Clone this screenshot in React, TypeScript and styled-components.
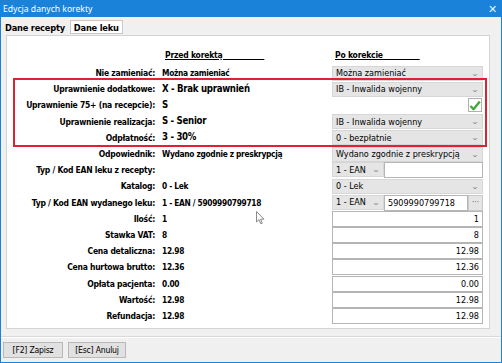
import React from "react";
import styled, { createGlobalStyle } from "styled-components";

const GlobalStyle = createGlobalStyle`
  html, body {
    margin: 0;
    padding: 0;
    background: #ffffff;
  }
  * {
    box-sizing: border-box;
  }
`;

const Window = styled.div`
  position: relative;
  width: 502px;
  height: 363px;
  display: flex;
  flex-direction: column;
  background: #f0f0f0;
  border: 1px solid #1a82d9;
  border-top: none;
  font-family: "DejaVu Sans Condensed", "DejaVu Sans", sans-serif;
  font-size: 9px;
  color: #000;
  overflow: hidden;
`;

const TitleBar = styled.div`
  height: 17px;
  margin: 0 -1px;
  padding: 0 5px 0 3px;
  display: flex;
  align-items: center;
  justify-content: space-between;
  background: #1a82d9;
  color: #fff;
  font-family: "Noto Sans", "Open Sans", sans-serif;
  font-size: 8.6px;
`;

const CloseGlyph = styled.span`
  font-size: 11px;
  line-height: 1;
  color: #e8f2fb;
`;

const TabStrip = styled.div`
  height: 18px;
  padding: 2px 0 0 0;
  display: flex;
  align-items: center;
  gap: 1px;
`;

const Tab = styled.div<{ $active?: boolean }>`
  height: 14px;
  padding: 0 3px;
  display: flex;
  align-items: center;
  font-weight: bold;
  font-size: 9.2px;
  letter-spacing: -0.2px;
  background: ${(p) => (p.$active ? "#ffffff" : "transparent")};
  border: 1px solid ${(p) => (p.$active ? "#c9c9c9" : "transparent")};
`;

const Panel = styled.div`
  margin: 0 11px 0 5px;
  height: 294px;
  background: #ffffff;
  border: 1px solid #d4d4d4;
  display: flex;
  flex-direction: column;
`;

const HeaderRow = styled.div`
  height: 29px;
  display: grid;
  grid-template-columns: 155px 170px 151px;
  align-items: center;
  padding-top: 8px;
`;

const HeaderCell = styled.span`
  grid-column: ${(p: { $col: number }) => p.$col};
  padding-left: 3px;
  font-weight: bold;
  font-size: 8.5px;
  letter-spacing: -0.2px;
  text-decoration: underline;
  white-space: pre;
`;

const Row = styled.div`
  height: 16.2px;
  display: grid;
  grid-template-columns: 155px 170px 151px;
  align-items: center;
`;

const Label = styled.span`
  padding-right: 7px;
  text-align: right;
  font-weight: bold;
  font-size: 8.5px;
  letter-spacing: -0.25px;
  white-space: nowrap;
`;

const Value = styled.span<{ $big?: boolean }>`
  font-weight: bold;
  white-space: nowrap;
  font-size: ${(p) => (p.$big ? "9.6px" : "8.3px")};
  letter-spacing: ${(p) => (p.$big ? "-0.3px" : "-0.3px")};
  margin-top: ${(p) => (p.$big ? "-2px" : "0")};
`;

const Highlight = styled.div`
  position: relative;

  &::before {
    content: "";
    position: absolute;
    left: 6px;
    right: 2px;
    top: -3px;
    bottom: -1px;
    border: 2px solid #e0222e;
    pointer-events: none;
  }
`;

const Combo = styled.div`
  height: 15px;
  padding: 0 4px 0 3px;
  display: flex;
  align-items: center;
  justify-content: space-between;
  background: #e5e5e5;
  border: 1px solid #d6d6d6;
  white-space: nowrap;
  overflow: hidden;
`;

const Chevron = styled.span`
  color: #8a8a8a;
  font-size: 8px;
  transform: scaleX(1.4);
`;

const Field = styled.div<{ $right?: boolean }>`
  height: 16px;
  padding: 0 3px;
  display: flex;
  align-items: center;
  justify-content: ${(p) => (p.$right ? "flex-end" : "flex-start")};
  background: #ffffff;
  border: 1px solid #b5b5b5;
  white-space: nowrap;
`;

const Split = styled.div<{ $cols: string }>`
  display: grid;
  grid-template-columns: ${(p) => p.$cols};
`;

const DotsButton = styled.div`
  height: 16px;
  display: flex;
  align-items: center;
  justify-content: center;
  background: #e5e5e5;
  border: 1px solid #c8c8c8;
  color: #666;
  font-size: 8px;
`;

const CheckCell = styled.div`
  display: flex;
  justify-content: flex-end;
  padding-right: 1px;
`;

const CheckBox = styled.div`
  width: 14px;
  height: 14px;
  border: 1px solid #b0b0b0;
  background: #ffffff;
  display: flex;
  align-items: center;
  justify-content: center;
`;

const Footer = styled.div`
  flex: 1;
  margin-top: 7px;
  border-top: 1px solid #dadada;
  box-shadow: inset 0 1px 0 #ffffff;
  padding: 5px 0 0 2px;
  display: flex;
  gap: 5px;
`;

const Button = styled.div`
  width: ${(p: { $w: number }) => p.$w}px;
  height: 16px;
  display: flex;
  align-items: center;
  justify-content: center;
  background: #e1e1e1;
  border: 1px solid #b9b9b9;
  font-size: 8.6px;
  letter-spacing: -0.2px;
`;

const Cursor = styled.svg`
  position: absolute;
  left: 255px;
  top: 211px;
`;

function ComboBox({ text }: { text: string }) {
  return (
    <Combo>
      <span>{text}</span>
      <Chevron>⌄</Chevron>
    </Combo>
  );
}

type Line = { label: string; value: string; control: React.ReactNode };

const highlighted: Line[] = [
  { label: "Uprawnienie dodatkowe:", value: "X - Brak uprawnień", control: <ComboBox text="IB - Inwalida wojenny" /> },
  {
    label: "Uprawnienie 75+ (na recepcie):",
    value: "S",
    control: (
      <CheckCell>
        <CheckBox>
          <svg width="12" height="11" viewBox="0 0 12 11">
            <path d="M1.5 6 L4.5 9.2 L10.8 1.5" fill="none" stroke="#3daa3a" strokeWidth="2.4" strokeLinejoin="round" />
          </svg>
        </CheckBox>
      </CheckCell>
    ),
  },
  { label: "Uprawnienie realizacja:", value: "S - Senior", control: <ComboBox text="IB - Inwalida wojenny" /> },
  { label: "Odpłatność:", value: "3 - 30%", control: <ComboBox text="0 - bezpłatnie" /> },
];

const lower: Line[] = [
  { label: "Odpowiednik:", value: "Wydano zgodnie z preskrypcją", control: <ComboBox text="Wydano zgodnie z preskrypcją" /> },
  {
    label: "Typ / Kod EAN leku z recepty:",
    value: "",
    control: (
      <Split $cols="52px 1fr">
        <ComboBox text="1 - EAN" />
        <Field />
      </Split>
    ),
  },
  { label: "Katalog:", value: "0 - Lek", control: <ComboBox text="0 - Lek" /> },
  {
    label: "Typ / Kod EAN wydanego leku:",
    value: "1 - EAN / 5909990799718",
    control: (
      <Split $cols="52px 1fr 15px">
        <ComboBox text="1 - EAN" />
        <Field>5909990799718</Field>
        <DotsButton>···</DotsButton>
      </Split>
    ),
  },
  { label: "Ilość:", value: "1", control: <Field $right>1</Field> },
  { label: "Stawka VAT:", value: "8", control: <Field $right>8</Field> },
  { label: "Cena detaliczna:", value: "12.98", control: <Field $right>12.98</Field> },
  { label: "Cena hurtowa brutto:", value: "12.36", control: <Field $right>12.36</Field> },
  { label: "Opłata pacjenta:", value: "0.00", control: <Field $right>0.00</Field> },
  { label: "Wartość:", value: "12.98", control: <Field $right>12.98</Field> },
  { label: "Refundacja:", value: "12.98", control: <Field $right>12.98</Field> },
];

export default function App() {
  return (
    <>
      <GlobalStyle />
      <Window>
        <TitleBar>
          <span>Edycja danych korekty</span>
          <CloseGlyph>✕</CloseGlyph>
        </TitleBar>
        <TabStrip>
          <Tab>Dane recepty</Tab>
          <Tab $active>Dane leku</Tab>
        </TabStrip>
        <Panel>
          <HeaderRow>
            <HeaderCell $col={2}>{"Przed korektą" + "\u00a0".repeat(17)}</HeaderCell>
            <HeaderCell $col={3}>{"Po korekcie" + "\u00a0".repeat(15)}</HeaderCell>
          </HeaderRow>
          <Row>
            <Label>Nie zamieniać:</Label>
            <Value>Można zamieniać</Value>
            <ComboBox text="Można zamieniać" />
          </Row>
          <Highlight>
            {highlighted.map((line) => (
              <Row key={line.label}>
                <Label>{line.label}</Label>
                <Value $big>{line.value}</Value>
                {line.control}
              </Row>
            ))}
          </Highlight>
          {lower.map((line) => (
            <Row key={line.label}>
              <Label>{line.label}</Label>
              <Value>{line.value}</Value>
              {line.control}
            </Row>
          ))}
        </Panel>
        <Footer>
          <Button $w={60}>[F2] Zapisz</Button>
          <Button $w={58}>[Esc] Anuluj</Button>
        </Footer>
        <Cursor width="9" height="14" viewBox="0 0 9 14">
          <path d="M0.5 0.5 L0.5 11 L3 8.6 L4.8 12.8 L6.3 12.2 L4.6 8.2 L8 8.2 Z" fill="#ffffff" stroke="#8a8a8a" strokeWidth="1" />
        </Cursor>
      </Window>
    </>
  );
}
